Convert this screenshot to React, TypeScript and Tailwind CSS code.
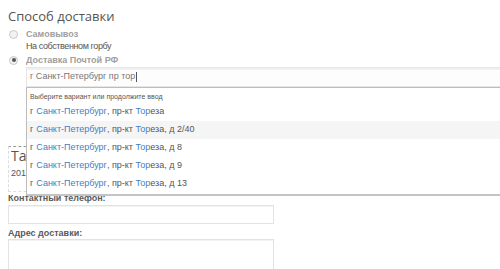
import React from "react";

const items = ["", ", д 2/40", ", д 8", ", д 9", ", д 13"];

function Radio({ checked }: { checked?: boolean }) {
  return (
    <span className="relative inline-flex h-[9px] w-[9px] shrink-0 items-center justify-center rounded-full border border-[#c8c8c8] bg-[#f2f2f2]">
      {checked && <span className="h-[4px] w-[4px] rounded-full bg-[#555]" />}
    </span>
  );
}

export default function App() {
  return (
    <div className="relative h-[269px] w-[500px] overflow-hidden bg-white font-['Liberation_Sans',Arial,sans-serif] text-[#555]">
      <div className="px-2 pt-[6px]">
        <h2 className="font-['Open_Sans',sans-serif] text-[13px] leading-[20px] text-[#555]">Способ доставки</h2>

        {/* Delivery options */}
        <div className="mt-[2px] flex h-[12px] items-center gap-[8px] pl-[1px]">
          <Radio />
          <span className="text-[9px] font-bold leading-[12px] text-[#a0a0a0]">Самовывоз</span>
        </div>
        <div className="pl-[18px] text-[9px] leading-[12px] tracking-[-0.4px] text-[#555]">На собственном горбу</div>
        <div className="mt-[2px] flex h-[12px] items-center gap-[8px] pl-[1px]">
          <Radio checked />
          <span className="text-[9px] font-bold leading-[12px] text-[#a0a0a0]">Доставка Почтой РФ</span>
        </div>

        <div className="relative ml-[18px] mt-[1px]">
          <div className="flex h-[20px] w-[500px] items-center border border-[#e6e6e6] bg-[#fdfdfd] pl-[3px] text-[9px] text-[#777] shadow-[inset_0_2px_0_#f0f0f0]">
            г Санкт-Петербург пр тор<span className="ml-[1px] h-[10px] w-px bg-[#555]" />
          </div>

          {/* Suggestions dropdown */}
          <div className="absolute left-0 top-[20px] z-10 w-[500px] border border-[#bdbdbd] border-b-2 border-b-[#c4c4c4] bg-white pb-[1px]">
            <div className="px-[3px] pt-[3px] text-[7px] leading-[12px] text-[#555]">Выберите вариант или продолжите ввод</div>
            {items.map((tail, i) => (
              <div
                key={i}
                className={`flex h-[18px] items-center px-[3px] text-[9px] ${i === 1 ? "bg-[#f5f5f5]" : ""}`}
              >
                <span>г</span>
                <span className="ml-[3px] text-[#3f7fc3]">Санкт-Петербург</span>
                <span>, пр-кт&nbsp;</span>
                <span className="text-[#3f7fc3]">Тор</span>
                <span>еза{tail}</span>
              </div>
            ))}
          </div>
        </div>

        {/* Partially hidden block behind dropdown */}
        <div className="mt-[59px] h-[46px] w-[60px] border border-dashed border-[#ddd] border-t-[#999] pl-[2px]">
          <div className="font-['Open_Sans',sans-serif] text-[14px] leading-[18px] text-[#555]">Та</div>
          <div className="mt-[2px] text-[9px] leading-[12px] text-[#555]">2013</div>
        </div>

        <div className="text-[9px] font-bold leading-[12px] text-[#5a5a5a]">Контактный телефон:</div>
        <div className="mt-[1px] h-[19px] w-[266px] border border-[#e3e3e3] shadow-[inset_0_1px_0_#f3f3f3]" />
        <div className="mt-[3px] text-[9px] font-bold leading-[12px] text-[#5a5a5a]">Адрес доставки:</div>
        <div className="h-[40px] w-[266px] border border-[#e3e3e3] shadow-[inset_0_1px_0_#f3f3f3]" />
      </div>
    </div>
  );
}
